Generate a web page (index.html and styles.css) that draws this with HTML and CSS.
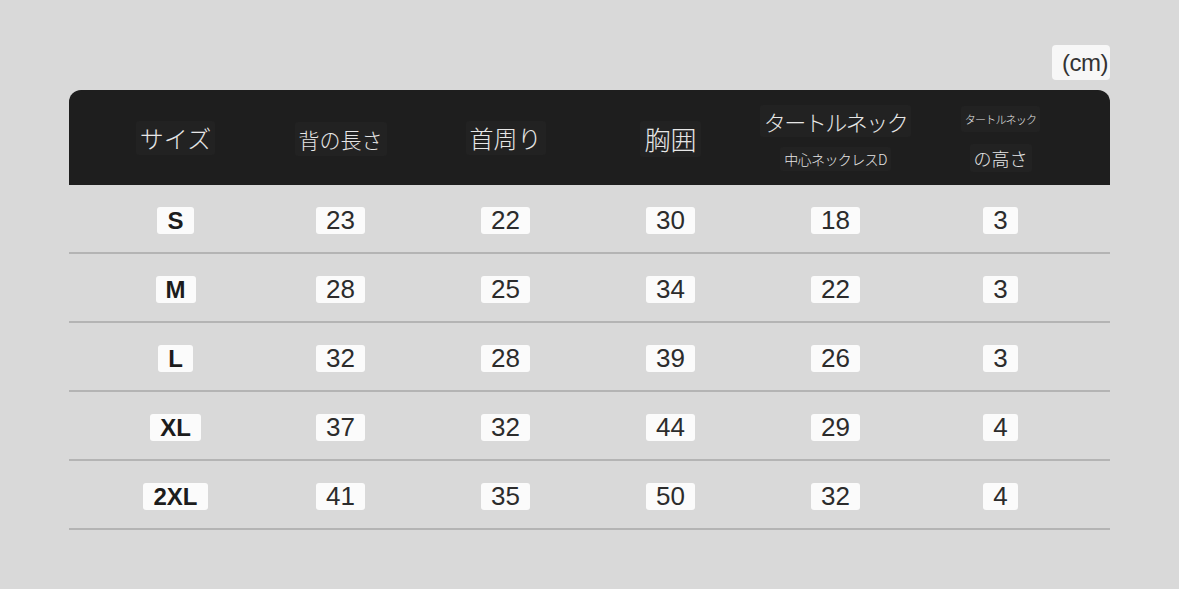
FILE: index.html
```html
<!DOCTYPE html>
<html lang="ja">
<head>
<meta charset="utf-8">
<title>サイズ表</title>
<link rel="stylesheet" href="styles.css">
</head>
<body>
<div class="page">
  <div class="unit-row"><span class="unit">(cm)</span></div>
  <div class="table">
    <div class="head">
      <div class="hcell"><span class="hl h-lg">サイズ</span></div>
      <div class="hcell"><span class="hl h-md">背の長さ</span></div>
      <div class="hcell"><span class="hl h-lg">首周り</span></div>
      <div class="hcell"><span class="hl h-xl">胸囲</span></div>
      <div class="hcell two"><span class="hl h-top">タートルネック</span><span class="hl h-sub">中心ネックレスD</span></div>
      <div class="hcell two"><span class="hl h-tiny">タートルネック</span><span class="hl h-sub2">の高さ</span></div>
    </div>
    <div class="row">
      <div class="cell"><span class="tag b">S</span></div>
      <div class="cell"><span class="tag">23</span></div>
      <div class="cell"><span class="tag">22</span></div>
      <div class="cell"><span class="tag">30</span></div>
      <div class="cell"><span class="tag">18</span></div>
      <div class="cell"><span class="tag">3</span></div>
    </div>
    <div class="row">
      <div class="cell"><span class="tag b">M</span></div>
      <div class="cell"><span class="tag">28</span></div>
      <div class="cell"><span class="tag">25</span></div>
      <div class="cell"><span class="tag">34</span></div>
      <div class="cell"><span class="tag">22</span></div>
      <div class="cell"><span class="tag">3</span></div>
    </div>
    <div class="row">
      <div class="cell"><span class="tag b">L</span></div>
      <div class="cell"><span class="tag">32</span></div>
      <div class="cell"><span class="tag">28</span></div>
      <div class="cell"><span class="tag">39</span></div>
      <div class="cell"><span class="tag">26</span></div>
      <div class="cell"><span class="tag">3</span></div>
    </div>
    <div class="row">
      <div class="cell"><span class="tag b">XL</span></div>
      <div class="cell"><span class="tag">37</span></div>
      <div class="cell"><span class="tag">32</span></div>
      <div class="cell"><span class="tag">44</span></div>
      <div class="cell"><span class="tag">29</span></div>
      <div class="cell"><span class="tag">4</span></div>
    </div>
    <div class="row">
      <div class="cell"><span class="tag b">2XL</span></div>
      <div class="cell"><span class="tag">41</span></div>
      <div class="cell"><span class="tag">35</span></div>
      <div class="cell"><span class="tag">50</span></div>
      <div class="cell"><span class="tag">32</span></div>
      <div class="cell"><span class="tag">4</span></div>
    </div>
  </div>
</div>
</body>
</html>
```

FILE: styles.css
```css
html, body {
  margin: 0;
  padding: 0;
  background: #d9d9d9;
}
body {
  width: 1179px;
  height: 589px;
  overflow: hidden;
  font-family: "Liberation Sans", "Noto Sans CJK JP", sans-serif;
}
.page {
  padding: 45px 69px 0 69px;
}
.unit-row {
  display: flex;
  justify-content: flex-end;
  height: 45px;
}
.unit {
  display: block;
  height: 35px;
  line-height: 35px;
  padding: 0 2px 0 10px;
  background: #f7f7f7;
  border-radius: 4px;
  color: #333;
  font-size: 24px;
  letter-spacing: -0.5px;
}
.table {
  width: 1041px;
}
.head,
.row {
  display: grid;
  grid-template-columns: repeat(6, 165px);
  padding-left: 24px;
}
.head {
  height: 95px;
  background: #1e1e1e;
  border-radius: 12px 12px 0 0;
  align-items: center;
}
.hcell {
  display: flex;
  flex-direction: column;
  align-items: center;
  justify-content: center;
}
.hcell.two {
  gap: 10px;
}
.hl {
  font-family: "Noto Sans CJK JP", sans-serif;
  font-weight: 300;
  color: #e6e6e6;
  background: #222222;
  border-radius: 3px;
  padding: 2px 4px;
  white-space: nowrap;
}
.h-lg { font-size: 24px; line-height: 30px; }
.h-md { font-size: 21px; line-height: 30px; margin-top: 2px; }
.h-xl { font-size: 26px; line-height: 32px; margin-top: 3px; }
.h-top { font-size: 22px; line-height: 28px; letter-spacing: -1.5px; }
.h-sub { font-size: 14px; line-height: 20px; letter-spacing: -0.6px; }
.h-tiny { font-size: 11px; line-height: 22px; letter-spacing: -0.8px; margin-top: 2px; }
.h-sub2 { font-size: 18px; line-height: 24px; margin-top: 2px; }
.row {
  height: 67px;
  border-bottom: 2px solid #b4b4b4;
  align-items: center;
}
.cell {
  display: flex;
  justify-content: center;
  padding-top: 4px;
}
.tag {
  display: block;
  background: #fbfbfb;
  border-radius: 3px;
  color: #2c2c2c;
  font-size: 26px;
  line-height: 27px;
  height: 27px;
  padding: 0 10px;
}
.tag.b {
  font-weight: bold;
  font-size: 24px;
  color: #1c1c1c;
  padding: 0 10px;
}
```
